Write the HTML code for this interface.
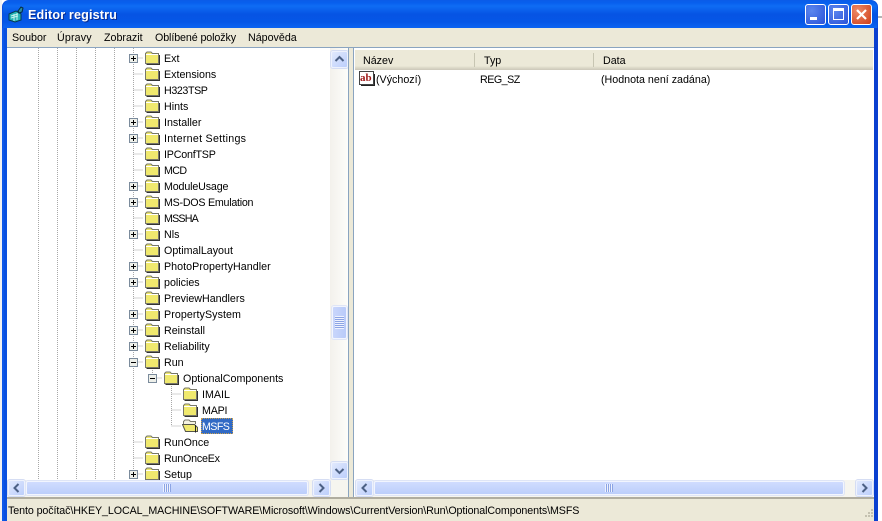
<!DOCTYPE html>
<html><head><meta charset="utf-8"><style>
html,body{margin:0;padding:0;background:#fff;width:882px;height:521px;overflow:hidden}
*{box-sizing:border-box}
body{position:relative;font:10.7px "Liberation Sans",sans-serif;color:#000}
.a{position:absolute}
.t{position:absolute;white-space:nowrap;line-height:14px;height:14px;margin-top:1px}
.sb{position:absolute;border-radius:2px;background:linear-gradient(#d0dcfe,#bccefb);border:1px solid #f2f5fe;box-shadow:0 0 0 1px #dfe5f6}
.btn{position:absolute;width:17px;height:17px;border-radius:2px;background:linear-gradient(135deg,#e1e9fd,#bccefb);border:1px solid #eef2fd;box-shadow:0 0 0 1px #d5ddf3}
.wb{position:absolute;top:4px;width:21px;height:21px;border:1px solid #fff;border-radius:3px}
</style></head><body>
<svg width="0" height="0" style="position:absolute"><defs>
<symbol id="f" viewBox="0 0 16 14"><path d="M1.500 3.500V2.500L3 1H7L8.500 2.500H14.500V12.500H1.500Z" fill="#f0e96e" stroke="#77776a"/><path d="M2 3.500H14" stroke="#fff"/><path d="M15.500 4V13.500H2.500" stroke="#333" fill="none"/></symbol>
<symbol id="o" viewBox="0 0 16 14"><path d="M1.500 5V2.500L3 1H7L8.500 2.500H13.500V5" fill="#f4f2e2" stroke="#77776a"/><path d="M.5 5.500H12.500L15.500 8.500V12.500H3.500Z" fill="#f0e96e" stroke="#55554a"/><path d="M13.500 6V13.500" stroke="#222"/></symbol>
<symbol id="p" viewBox="0 0 9 9"><rect x=".5" y=".5" width="8" height="8" fill="#eef0ea" stroke="#7b8b9c"/><path d="M2 4.500H7M4.500 2V7" stroke="#000"/></symbol>
<symbol id="m" viewBox="0 0 9 9"><rect x=".5" y=".5" width="8" height="8" fill="#eef0ea" stroke="#7b8b9c"/><path d="M2 4.500H7" stroke="#000"/></symbol>
</defs></svg>

<!-- window frame -->
<div class="a" style="left:0;top:0;width:2px;height:521px;background:#f2f2f2"></div>
<div class="a" style="left:878px;top:16px;width:4px;height:2px;background:#b4b4b4"></div>
<div class="a" style="left:2px;top:0;width:876px;height:521px;background:#0a50e0;border-radius:7px 7px 0 0"></div>
<div class="a" style="left:3px;top:0;width:874px;height:28px;border-radius:7px 7px 0 0;background:linear-gradient(#0a5be8 0,#0860ee 3px,#0f6cf4 6px,#0654e4 14px,#0556e6 22px,#0a62f0 27px)"></div>
<div class="a" style="left:874px;top:28px;width:4px;height:493px;background:#0a3fd0"></div>
<div class="a" style="left:2px;top:28px;width:2px;height:493px;background:#0d58ea"></div>

<!-- title -->
<svg class="a" style="left:8px;top:6px" width="17" height="17" viewBox="0 0 17 17"><path d="M1 8L8 5L13 8V14L7 16L1 14Z" fill="#28b4b4" stroke="#063a50"/><path d="M3 10L10 8M3 12L10 10M6 8V15M9 7V14" stroke="#c6f4f0"/><path d="M10 5L13 1L15 2L14 6L11 7Z" fill="#2c8c9c" stroke="#052c40"/></svg>
<div class="t" style="left:28px;top:8px;margin-top:0;font-weight:bold;font-size:12.6px;letter-spacing:.15px;color:#fff;text-shadow:1px 1px #0a2c90">Editor registru</div>
<div class="wb" style="left:805px;background:radial-gradient(circle at 30% 30%,#5b86ee,#2a52d8)"><div class="a" style="left:4px;top:12px;width:7px;height:3px;background:#fff"></div></div>
<div class="wb" style="left:828px;background:radial-gradient(circle at 30% 30%,#5b86ee,#2a52d8)"><div class="a" style="left:4px;top:3px;width:11px;height:12px;border:1px solid #fff;border-top:3px solid #fff"></div></div>
<div class="wb" style="left:851px;background:radial-gradient(circle at 30% 30%,#ee8a68,#cf3e18)"><svg class="a" style="left:3px;top:3px" width="13" height="13"><path d="M2 2L11 11M11 2L2 11" stroke="#fff" stroke-width="2.200"/></svg></div>

<!-- menu -->
<div class="a" style="left:7px;top:28px;width:867px;height:19px;background:#ece9d8"></div>
<div class="t" style="left:12px;top:30px">Soubor</div>
<div class="t" style="left:57px;top:30px;letter-spacing:.15px">Úpravy</div>
<div class="t" style="left:104px;top:30px">Zobrazit</div>
<div class="t" style="left:155px;top:30px;letter-spacing:-.1px">Oblíbené položky</div>
<div class="t" style="left:248px;top:30px">Nápověda</div>
<div class="a" style="left:7px;top:47px;width:867px;height:1px;background:#8aa4c0"></div>

<!-- client bg -->
<div class="a" style="left:7px;top:48px;width:867px;height:450px;background:#fff"></div>

<!-- tree lines -->
<svg class="a" style="left:7px;top:48px" width="342" height="432">
<g stroke="#a8a8a8" stroke-dasharray="1 1" fill="none" shape-rendering="crispEdges">
<path d="M31.500 0V432M50.500 0V432M69.500 0V432M88.500 0V432M107.500 0V432"/>
<path d="M126.500 0V432"/>
<path d="M145.500 320V326M164.500 336V378"/>
<path d="M126.500 10H136M126.500 26H136M126.500 42H136M126.500 58H136M126.500 74H136M126.500 90H136M126.500 106H136M126.500 122H136M126.500 138H136M126.500 154H136M126.500 170H136M126.500 186H136M126.500 202H136M126.500 218H136M126.500 234H136M126.500 250H136M126.500 266H136M126.500 282H136M126.500 298H136M126.500 314H136M126.500 394H136M126.500 410H136M126.500 426H136"/>
<path d="M145.500 330H155M164.500 346H174M164.500 362H174M164.500 378H174"/>
</g></svg>

<!-- rows -->
<svg class="a" style="left:0;top:0" width="340" height="480">
<g>
<use href="#p" x="129" y="54" width="9" height="9"/><use href="#p" x="129" y="118" width="9" height="9"/><use href="#p" x="129" y="134" width="9" height="9"/><use href="#p" x="129" y="182" width="9" height="9"/><use href="#p" x="129" y="198" width="9" height="9"/><use href="#p" x="129" y="230" width="9" height="9"/><use href="#p" x="129" y="262" width="9" height="9"/><use href="#p" x="129" y="278" width="9" height="9"/><use href="#p" x="129" y="310" width="9" height="9"/><use href="#p" x="129" y="326" width="9" height="9"/><use href="#p" x="129" y="342" width="9" height="9"/><use href="#m" x="129" y="358" width="9" height="9"/><use href="#m" x="148" y="374" width="9" height="9"/><use href="#p" x="129" y="470" width="9" height="9"/>
<use href="#f" x="144" y="51" width="16" height="14"/><use href="#f" x="144" y="67" width="16" height="14"/><use href="#f" x="144" y="83" width="16" height="14"/><use href="#f" x="144" y="99" width="16" height="14"/><use href="#f" x="144" y="115" width="16" height="14"/><use href="#f" x="144" y="131" width="16" height="14"/><use href="#f" x="144" y="147" width="16" height="14"/><use href="#f" x="144" y="163" width="16" height="14"/><use href="#f" x="144" y="179" width="16" height="14"/><use href="#f" x="144" y="195" width="16" height="14"/><use href="#f" x="144" y="211" width="16" height="14"/><use href="#f" x="144" y="227" width="16" height="14"/><use href="#f" x="144" y="243" width="16" height="14"/><use href="#f" x="144" y="259" width="16" height="14"/><use href="#f" x="144" y="275" width="16" height="14"/><use href="#f" x="144" y="291" width="16" height="14"/><use href="#f" x="144" y="307" width="16" height="14"/><use href="#f" x="144" y="323" width="16" height="14"/><use href="#f" x="144" y="339" width="16" height="14"/><use href="#f" x="144" y="355" width="16" height="14"/>
<use href="#f" x="163" y="371" width="16" height="14"/><use href="#f" x="182" y="387" width="16" height="14"/><use href="#f" x="182" y="403" width="16" height="14"/><use href="#o" x="182" y="419" width="16" height="14"/>
<use href="#f" x="144" y="435" width="16" height="14"/><use href="#f" x="144" y="451" width="16" height="14"/><use href="#f" x="144" y="467" width="16" height="14"/>
</g></svg>
<div class="t" style="left:164px;top:51px">Ext</div>
<div class="t" style="left:164px;top:67px">Extensions</div>
<div class="t" style="left:164px;top:83px;letter-spacing:-.4px">H323TSP</div>
<div class="t" style="left:164px;top:99px">Hints</div>
<div class="t" style="left:164px;top:115px">Installer</div>
<div class="t" style="left:164px;top:131px;letter-spacing:.26px">Internet Settings</div>
<div class="t" style="left:164px;top:147px;letter-spacing:-.2px">IPConfTSP</div>
<div class="t" style="left:164px;top:163px;letter-spacing:-.6px">MCD</div>
<div class="t" style="left:164px;top:179px;letter-spacing:-.15px">ModuleUsage</div>
<div class="t" style="left:164px;top:195px;letter-spacing:-.25px">MS-DOS Emulation</div>
<div class="t" style="left:164px;top:211px;letter-spacing:-.8px">MSSHA</div>
<div class="t" style="left:164px;top:227px">Nls</div>
<div class="t" style="left:164px;top:243px">OptimalLayout</div>
<div class="t" style="left:164px;top:259px;letter-spacing:.05px">PhotoPropertyHandler</div>
<div class="t" style="left:164px;top:275px">policies</div>
<div class="t" style="left:164px;top:291px">PreviewHandlers</div>
<div class="t" style="left:164px;top:307px;letter-spacing:.07px">PropertySystem</div>
<div class="t" style="left:164px;top:323px">Reinstall</div>
<div class="t" style="left:164px;top:339px">Reliability</div>
<div class="t" style="left:164px;top:355px">Run</div>
<div class="t" style="left:183px;top:371px">OptionalComponents</div>
<div class="t" style="left:202px;top:387px">IMAIL</div>
<div class="t" style="left:202px;top:403px;letter-spacing:-.2px">MAPI</div>
<div class="a" style="left:201px;top:418px;width:32px;height:16px;background:#316ac5;outline:1px dotted #c9a050;outline-offset:-1px"></div>
<div class="t" style="left:202px;top:419px;color:#fff;letter-spacing:-.6px">MSFS</div>
<div class="t" style="left:164px;top:435px">RunOnce</div>
<div class="t" style="left:164px;top:451px;letter-spacing:-.2px">RunOnceEx</div>
<div class="t" style="left:164px;top:467px">Setup</div>

<!-- vertical scrollbar -->
<div class="a" style="left:330px;top:48px;width:18px;height:432px;background:linear-gradient(90deg,#f3f1ec,#fdfdfa)"></div>
<div class="btn" style="left:331px;top:51px"><svg width="15" height="15"><path d="M3.500 9L7.500 5L11.500 9" fill="none" stroke="#4d6185" stroke-width="2"/></svg></div>
<div class="sb" style="left:332px;top:306px;width:15px;height:33px;background:linear-gradient(90deg,#c9d6fb,#b9cbfa)"></div>
<div class="a" style="left:335px;top:316px;width:9px;height:13px;background:repeating-linear-gradient(#eef2fe 0 1px,#8ca4e4 1px 2px)"></div>
<div class="btn" style="left:331px;top:462px"><svg width="15" height="15"><path d="M3.500 6L7.500 10L11.500 6" fill="none" stroke="#4d6185" stroke-width="2"/></svg></div>

<!-- tree h scrollbar -->
<div class="a" style="left:7px;top:480px;width:341px;height:17px;background:#f6f5ef"></div>
<div class="btn" style="left:8px;top:480px;height:16px"><svg width="15" height="14"><path d="M9.500 3L5.500 7L9.500 11" fill="none" stroke="#4d6185" stroke-width="2"/></svg></div>
<div class="sb" style="left:26px;top:481px;width:282px;height:14px"></div>
<div class="a" style="left:163px;top:484px;width:8px;height:8px;background:repeating-linear-gradient(90deg,#eef2fe 0 1px,#8ca4e4 1px 2px)"></div>
<div class="btn" style="left:313px;top:480px;height:16px"><svg width="15" height="14"><path d="M5.500 3L9.500 7L5.500 11" fill="none" stroke="#4d6185" stroke-width="2"/></svg></div>

<!-- splitter -->
<div class="a" style="left:348px;top:48px;width:1px;height:450px;background:#8aa4c0"></div>
<div class="a" style="left:349px;top:48px;width:4px;height:450px;background:#ece9d8"></div>
<div class="a" style="left:353px;top:48px;width:1px;height:450px;background:#8aa4c0"></div>

<!-- list header -->
<div class="a" style="left:355px;top:50px;width:518px;height:20px;background:linear-gradient(#ece9d8 0 16px,#e2dfcd 17px,#cbc7b8 20px)"></div>
<div class="a" style="left:474px;top:53px;width:1px;height:14px;background:#c7c5b2"></div>
<div class="a" style="left:593px;top:53px;width:1px;height:14px;background:#c7c5b2"></div>
<div class="t" style="left:363px;top:53px">Název</div>
<div class="t" style="left:484px;top:53px">Typ</div>
<div class="t" style="left:603px;top:53px">Data</div>

<!-- row -->
<svg class="a" style="left:359px;top:71px" width="16" height="16" viewBox="0 0 16 16"><path d="M.5.500H14.500V13.500H.5Z" fill="#fff" stroke="#444"/><path d="M15.500 3V14.500H2" fill="none" stroke="#222"/><rect x="1" y="2" width="13" height="8" fill="#fff"/><text x="1" y="10" font-family="Liberation Serif" font-weight="bold" font-size="11" fill="#a01818">ab</text></svg>
<div class="t" style="left:376px;top:72px">(Výchozí)</div>
<div class="t" style="left:480px;top:72px;letter-spacing:-.5px">REG_SZ</div>
<div class="t" style="left:601px;top:72px">(Hodnota není zadána)</div>

<!-- list h scrollbar -->
<div class="a" style="left:355px;top:480px;width:518px;height:17px;background:#f6f5ef"></div>
<div class="btn" style="left:356px;top:480px;height:16px"><svg width="15" height="14"><path d="M9.500 3L5.500 7L9.500 11" fill="none" stroke="#4d6185" stroke-width="2"/></svg></div>
<div class="sb" style="left:374px;top:481px;width:470px;height:14px"></div>
<div class="a" style="left:605px;top:484px;width:8px;height:8px;background:repeating-linear-gradient(90deg,#eef2fe 0 1px,#8ca4e4 1px 2px)"></div>
<div class="btn" style="left:856px;top:480px;height:16px"><svg width="15" height="14"><path d="M5.500 3L9.500 7L5.500 11" fill="none" stroke="#4d6185" stroke-width="2"/></svg></div>

<!-- status -->
<div class="a" style="left:7px;top:497px;width:867px;height:2px;background:#b0ada0"></div>
<div class="a" style="left:7px;top:499px;width:867px;height:22px;background:#ece9d8"></div>
<div class="t" style="left:8px;top:503px;letter-spacing:-.09px">Tento počítač\HKEY_LOCAL_MACHINE\SOFTWARE\Microsoft\Windows\CurrentVersion\Run\OptionalComponents\MSFS</div>
<svg class="a" style="left:862px;top:508px" width="12" height="13"><g fill="#c4c1b0" shape-rendering="crispEdges"><rect x="9" y="1" width="2" height="2"/><rect x="6" y="4" width="2" height="2"/><rect x="9" y="4" width="2" height="2"/><rect x="3" y="7" width="2" height="2"/><rect x="6" y="7" width="2" height="2"/><rect x="9" y="7" width="2" height="2"/></g></svg>
</body></html>
